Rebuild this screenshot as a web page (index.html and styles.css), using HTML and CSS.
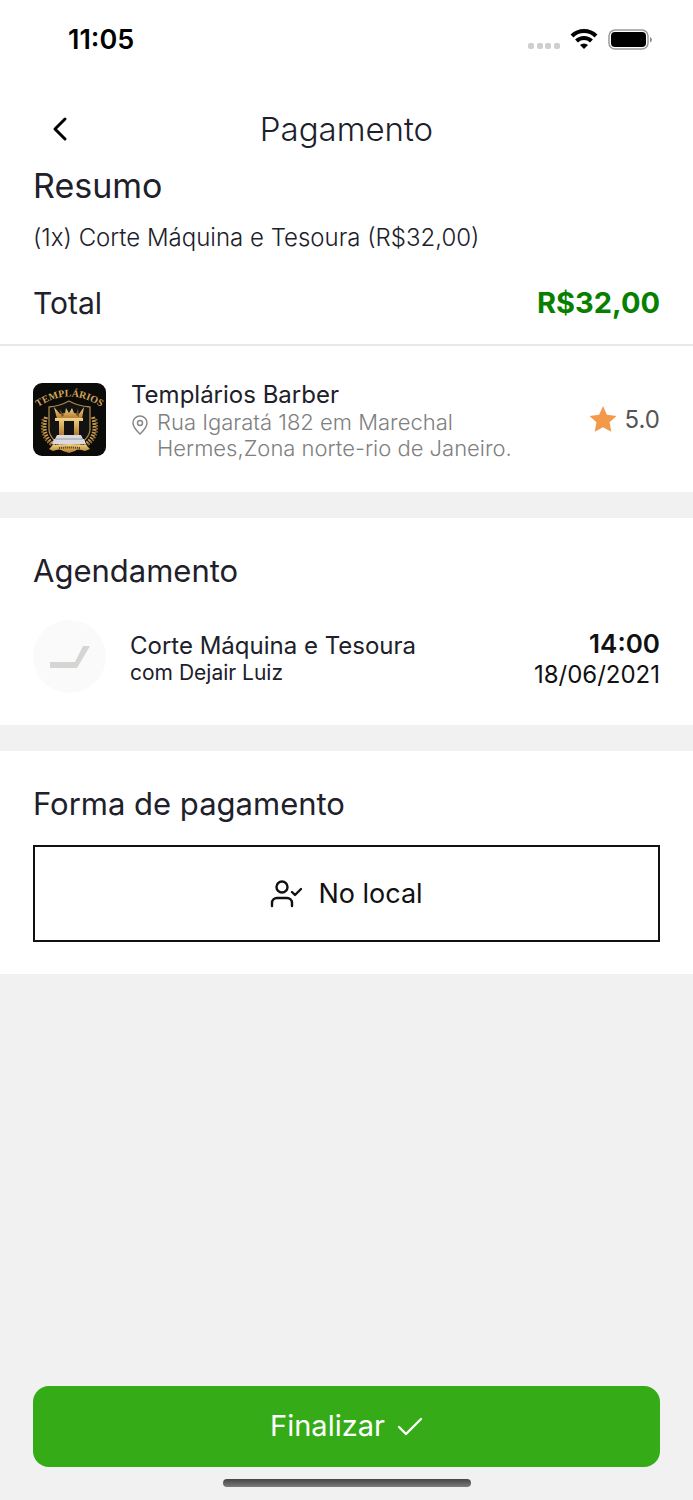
FILE: index.html
```html
<!DOCTYPE html>
<html lang="pt-BR">
<head>
  <meta charset="UTF-8" />
  <meta name="viewport" content="width=device-width, initial-scale=1.0"/>
  <title>Pagamento</title>
  <link rel="stylesheet" href="styles.css">
</head>
<body>
  <div class="status-bar">
    <time class="clock">11:05</time>
    <div class="status-icons">
      <svg class="signal" width="32" height="20" viewBox="0 0 32 20" fill="#cfcfcf" aria-hidden="true">
        <rect x="0" y="14" width="6" height="6" rx="2"/>
        <rect x="9" y="14" width="6" height="6" rx="2"/>
        <rect x="17" y="14" width="6" height="6" rx="2"/>
        <rect x="26" y="14" width="6" height="6" rx="2"/>
      </svg>
      <svg class="wifi" width="28" height="20" viewBox="0 0 28 20" aria-hidden="true">
        <path d="M2 7a17 17 0 0 1 24 0M6.500 12a10.700 10.700 0 0 1 15 0" fill="none" stroke="#000" stroke-width="4"/>
        <path d="M14 20l-4-4a5.800 5.800 0 0 1 8 0z"/>
      </svg>
      <svg class="battery" width="44" height="21" viewBox="0 0 44 21" aria-hidden="true">
        <rect x="1" y="1" width="39" height="19" rx="6" fill="none" stroke="#999" stroke-width="1.500"/>
        <rect x="3" y="3" width="35" height="15" rx="4"/>
        <path d="M42 8c2.500 1 2.500 4.500 0 5.500z" fill="#888"/>
      </svg>
    </div>
  </div>

  <header class="header">
    <button class="back" aria-label="Voltar">
      <svg width="24" height="28" viewBox="0 0 24 28" fill="none" stroke="#000" stroke-width="3" stroke-linecap="round" stroke-linejoin="round">
        <path d="M17 4L7 14l10 10"/>
      </svg>
    </button>
    <h1>Pagamento</h1>
  </header>

  <main>
    <section class="summary">
      <h2>Resumo</h2>
      <p class="item">(1x) Corte Máquina e Tesoura (R$32,00)</p>
      <div class="total">
        <span>Total</span>
        <strong>R$32,00</strong>
      </div>
    </section>

    <section class="shop">
      <svg class="logo" viewBox="0 0 73 73" role="img" aria-label="Templários">
        <defs>
          <linearGradient id="gold" x1="0" y1="0" x2="0" y2="1">
            <stop offset="0" stop-color="#f3d486"/>
            <stop offset="1" stop-color="#b0782c"/>
          </linearGradient>
          <path id="arc" d="M5 24Q36 3 68 24"/>
        </defs>
        <rect width="73" height="73" fill="#0b0b0a"/>
        <text class="logo-text" fill="#cfa557"><textPath href="#arc" startOffset="50%" text-anchor="middle">TEMPLÁRIOS</textPath></text>
        <path d="M16 24q11-1 20-6 9 5 21 6v23q-1 11-21 20-19-9-20-20z" fill="#111211" stroke="#a98446" stroke-width="1.300"/>
        <g fill="none" stroke="#c79a4e" stroke-width="4" stroke-dasharray="1.800 1.200">
          <path d="M13 34q-6 20 11 30"/>
          <path d="M60 34q6 20-11 30"/>
        </g>
        <g fill="none" stroke="#8e6730" stroke-width="2.500" stroke-dasharray="1.600 1.400">
          <path d="M10 36q-4 19 10 27"/>
          <path d="M63 36q4 19-10 27"/>
        </g>
        <path d="M24 36l-3-12 6 7 5-1 1-5 3 5 3-5 2 5 5 1 5-7-2 12z" fill="url(#gold)"/>
        <path d="M29 34l-3-8 5 6M43 32l2-7 1 9" fill="#765020"/>
        <path d="M22 35h28v3H22zM26 38h5v15h-5zM41 38h5v15h-5z" fill="url(#gold)"/>
        <path d="M24 52h24l2 4H22zM21 56h30l2 5H19z" fill="#d9d9df"/>
        <path d="M22 56h28" stroke="#9899a1"/>
        <path d="M20 62q16-2 33 0l4 4-5 2q-8-3-10 0l-6 2-6-2q-3-3-10 0l-4-2z" fill="url(#gold)"/>
        <path d="M26 65q10-1 21 0" stroke="#4f3512" stroke-width="2" stroke-dasharray="1 1" fill="none"/>
      </svg>
      <div class="info">
        <h3>Templários Barber</h3>
        <div class="address">
          <svg width="18" height="20" viewBox="0 0 18 20" fill="none" stroke="#888" stroke-width="1.500" aria-hidden="true">
            <path d="M9 19C6 16 2 12.500 2 8a7 7 0 0 1 14 0c0 4.500-4 8-7 11z"/>
            <circle cx="9" cy="8" r="2.500"/>
          </svg>
          <address>Rua Igaratá 182 em Marechal<br>Hermes,Zona norte-rio de Janeiro.</address>
        </div>
      </div>
      <div class="rating">
        <svg width="28" height="28" viewBox="0 0 26 26" fill="#f2994a" aria-hidden="true">
          <path d="M13 1l3.600 8 8.900 1.100-6.400 6 1.600 8.800L13 20.700 5.300 24.900l1.600-8.800L.5 10.100 9.400 9z"/>
        </svg>
        <span>5.0</span>
      </div>
    </section>

    <section class="booking">
      <h2>Agendamento</h2>
      <div class="appointment">
        <div class="avatar">
          <svg width="40" height="24" viewBox="0 0 40 24" fill="#d5d5d3" aria-hidden="true">
            <path d="M0 17h25L33 1h7L27 23H0z"/>
          </svg>
        </div>
        <div class="service">
          <h3>Corte Máquina e Tesoura</h3>
          <p>com Dejair Luiz</p>
        </div>
        <div class="when">
          <strong>14:00</strong>
          <span>18/06/2021</span>
        </div>
      </div>
    </section>

    <section class="payment">
      <h2>Forma de pagamento</h2>
      <button class="method">
        <svg width="32" height="28" viewBox="0 0 32 28" fill="none" stroke="#111" stroke-width="2.400" stroke-linecap="round" stroke-linejoin="round" aria-hidden="true">
          <circle cx="12" cy="7" r="5.500"/>
          <path d="M2 26v-3a5 5 0 0 1 5-5h10a5 5 0 0 1 5 5v3M22 12l3 3 6-6"/>
        </svg>
        No local
      </button>
    </section>
  </main>

  <footer class="footer">
    <button class="finish">
      Finalizar
      <svg width="26" height="20" viewBox="0 0 26 20" fill="none" stroke="#fff" stroke-width="2.400" stroke-linecap="round" stroke-linejoin="round" aria-hidden="true">
        <path d="M2 11l7 7L24 3"/>
      </svg>
    </button>
    <div class="home-indicator"></div>
  </footer>
</body>
</html>
```
FILE: styles.css
```css
* {
  box-sizing: border-box;
}

body {
  margin: 0;
  min-height: 100vh;
  display: flex;
  flex-direction: column;
  background: #f1f1f1;
  color: #20202a;
  font-family: Inter, "Liberation Sans", sans-serif;
  font-size: 24px;
}

h1, h2, h3, p {
  margin: 0;
  font-weight: 400;
}

button {
  font-family: inherit;
  cursor: pointer;
}

svg {
  display: block;
  flex-shrink: 0;
}

.status-bar {
  display: flex;
  justify-content: space-between;
  align-items: center;
  height: 78px;
  padding: 0 41px 0 68px;
  background: #fff;
}

.clock {
  color: #000;
  font-size: 27px;
  font-weight: 600;
}

.status-icons {
  display: flex;
  align-items: center;
  gap: 10px;
}

.header {
  display: grid;
  grid-template-columns: 48px 1fr 48px;
  align-items: center;
  height: 86px;
  padding: 16px 36px 0;
  background: #fff;
}

.header h1 {
  text-align: center;
  font-size: 33px;
  font-weight: 300;
}

.back {
  display: flex;
  justify-content: center;
  padding: 8px 12px;
  border: 0;
  background: none;
}

section {
  padding: 32px 33px;
  background: #fff;
}

h2 {
  font-size: 31px;
  line-height: 42px;
}

h3 {
  font-size: 24px;
  line-height: 28px;
}

.summary {
  padding: 0 33px 20px;
  border-bottom: 2px solid #e8e8e8;
}

.summary h2 {
  font-size: 34px;
  line-height: 44px;
}

.item {
  margin: 12px 0 26px;
  font-weight: 300;
  line-height: 36px;
}

.total {
  display: flex;
  justify-content: space-between;
  font-size: 30px;
  line-height: 42px;
}

.total strong {
  color: #078000;
  font-size: 29px;
  font-weight: 700;
}

.shop {
  display: flex;
  align-items: center;
  gap: 25px;
  height: 146px;
  margin-bottom: 26px;
}

.logo {
  width: 73px;
  height: 73px;
  border-radius: 9px;
}

.logo-text {
  font: 700 10px "Liberation Serif", serif;
}

.info {
  flex: 1;
  padding-top: 4px;
}

.address {
  display: flex;
  gap: 8px;
}

.address svg {
  margin-top: 6px;
}

.address address {
  color: #808080;
  font-size: 22px;
  font-style: normal;
  font-weight: 300;
  line-height: 26px;
}

.rating {
  display: flex;
  align-items: center;
  gap: 8px;
  color: #555;
}

.booking {
  margin-bottom: 26px;
}

.appointment {
  display: flex;
  align-items: center;
  gap: 24px;
  margin-top: 28px;
}

.avatar {
  display: flex;
  justify-content: center;
  align-items: center;
  width: 73px;
  height: 73px;
  border-radius: 50%;
  background: #fafafa;
}

.service {
  flex: 1;
  padding-top: 4px;
}

.service p {
  font-size: 21px;
  line-height: 26px;
}

.when {
  display: flex;
  flex-direction: column;
  align-items: flex-end;
  padding-top: 4px;
  color: #111;
  line-height: 31px;
}

.when strong {
  font-size: 26px;
  font-weight: 600;
}

.method {
  display: flex;
  justify-content: center;
  align-items: center;
  gap: 16px;
  width: 100%;
  height: 97px;
  margin-top: 20px;
  border: 2px solid #111;
  background: #fff;
  color: #111;
  font-size: 27px;
}

.footer {
  margin-top: auto;
  padding: 32px 33px 13px;
}

.finish {
  display: flex;
  justify-content: center;
  align-items: center;
  gap: 12px;
  width: 100%;
  height: 81px;
  padding: 0 0 2px;
  border: 0;
  border-radius: 16px;
  background: #35ab18;
  color: #fff;
  font-size: 29px;
}

.home-indicator {
  width: 248px;
  height: 8px;
  margin: 12px auto 0;
  border-radius: 4px;
  background: linear-gradient(#454545, #7c7c7c);
}
```
